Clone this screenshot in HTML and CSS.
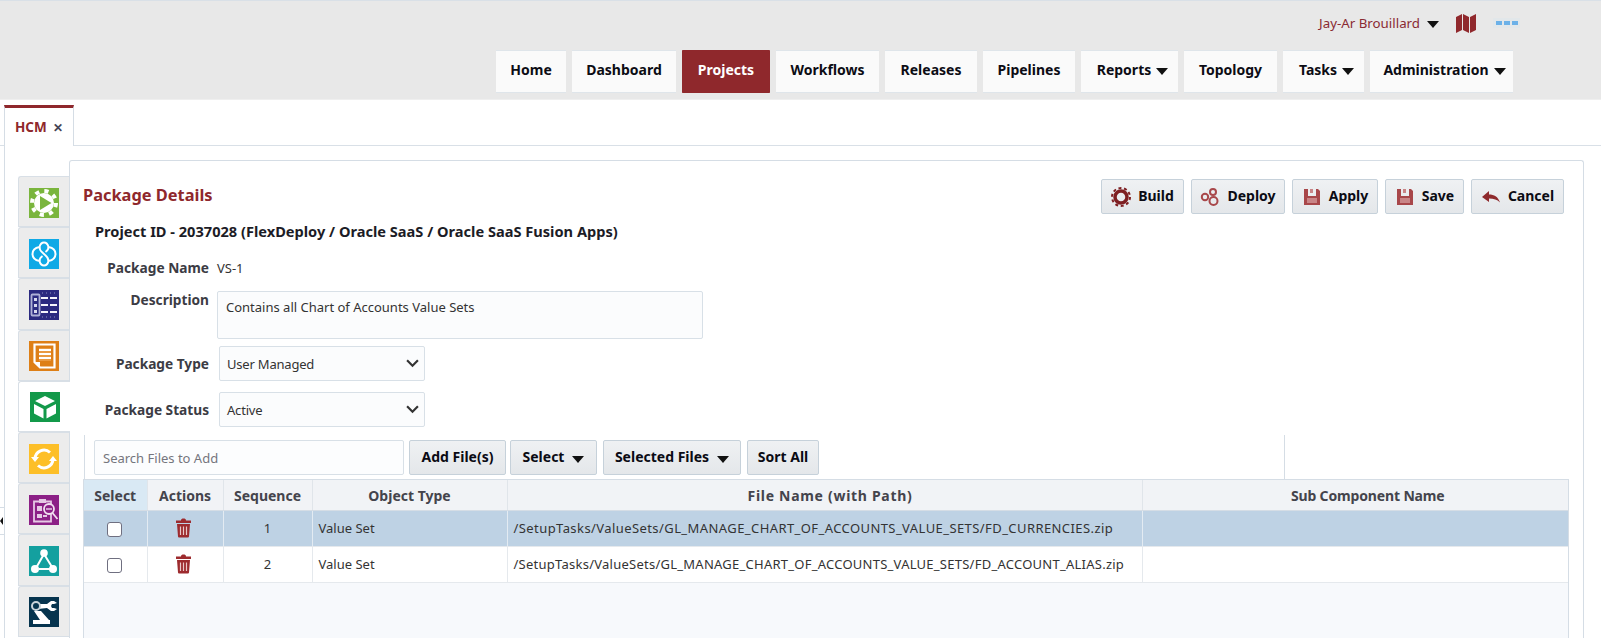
FILE: index.html
```html
<!DOCTYPE html>
<html lang="en">
<head>
<meta charset="utf-8">
<title>Package Details</title>
<link rel="stylesheet" href="styles.css">
</head>
<body>
<header class="top">
  <div class="user-row">
    <span class="user-name">Jay-Ar Brouillard</span>
    <span class="caret user-caret"></span>
    <svg class="map-icon" viewBox="0 0 20 19"><path d="M0 3 6 0v16l-6 3zM7 0l6 3v16l-6-3zM14 3l6-3v16l-6 3z" fill="#90282c"/></svg>
    <span class="dots"><i></i><i></i><i></i></span>
  </div>
  <nav class="nav">
    <a class="nav-item w-home">Home</a>
    <a class="nav-item w-dash">Dashboard</a>
    <a class="nav-item active w-proj">Projects</a>
    <a class="nav-item w-work">Workflows</a>
    <a class="nav-item w-rel">Releases</a>
    <a class="nav-item w-pipe">Pipelines</a>
    <a class="nav-item has-caret w-rep">Reports<span class="caret"></span></a>
    <a class="nav-item w-top">Topology</a>
    <a class="nav-item has-caret w-task">Tasks<span class="caret"></span></a>
    <a class="nav-item has-caret w-admin">Administration<span class="caret"></span></a>
  </nav>
</header>

<div class="tabstrip">
  <div class="tab"><span class="tab-name">HCM</span><span class="tab-x">✕</span></div>
</div>

<div class="workspace">
  <aside class="side">
    <div class="side-tab"><svg class="ico" viewBox="0 0 30 30"><rect width="30" height="30" fill="#7ab53d"/><circle cx="15" cy="15" r="10" fill="#fff"/><circle cx="15" cy="15" r="12" fill="none" stroke="#fff" stroke-width="4" stroke-dasharray="4.200 5.220"/><path d="M11 8 22.500 15 11 22z" fill="#7ab53d"/></svg></div>
    <div class="side-tab"><svg class="ico" viewBox="0 0 30 30"><rect width="30" height="30" fill="#0fa9e6"/><path d="M15 3.500c3 0 4 2.500 4.500 4.500 2.500.5 7 1.500 7 7s-4.500 6.500-7 7c-.5 2-1.500 4.500-4.500 4.500s-4-2.500-4.500-4.500c-2.500-.5-7-1.500-7-7s4.500-6.500 7-7C11 6 12 3.500 15 3.500z" fill="none" stroke="#fff" stroke-width="2"/><path d="M10.500 8c0 4 2.500 5 4.500 7s4.500 3 4.500 7M19.500 8c0 3-1.500 4-3 5M13.500 17c-1.500 1-3 2-3 5" fill="none" stroke="#fff" stroke-width="1.800"/></svg></div>
    <div class="side-tab"><svg class="ico" viewBox="0 0 30 30"><rect width="30" height="30" fill="#2b2a80"/><rect x="2.500" y="4.500" width="8" height="21" rx="1" fill="none" stroke="#aeb0d6" stroke-width="1.800"/><path d="M5 8h3v3H5zM5 14h3v3H5zM5 20h3v3H5z" fill="#d8d9ee"/><path d="M12 8h7M21 8h7M12 15h7M21 15h7M12 22h7M21 22h7" stroke="#f4f4fb" stroke-width="2"/><path d="M13 3h16M13 27h16" stroke="#8f90c4" stroke-width="1" stroke-dasharray="1 3"/></svg></div>
    <div class="side-tab"><svg class="ico" viewBox="0 0 30 30"><rect width="30" height="30" fill="#de7f16"/><path d="M5.500 3.500h20v23H11L5.500 21z" fill="none" stroke="#fff" stroke-width="2.200"/><path d="M6 21h5v5z" fill="#fff"/><path d="M10 7h12v13H10z" fill="#e99a42"/><path d="M10 9h12M10 13h12M10 17h12" stroke="#fff" stroke-width="1.800"/></svg></div>
    <div class="side-tab current"><svg class="ico" viewBox="0 0 30 30"><rect width="30" height="30" fill="#13994a"/><path d="M15 4l10 5-10 5-10-5zM4 12l9.500 5v9.500L4 21.500zM26 12l-9.500 5v9.500l9.500-5z" fill="#fff"/></svg></div>
    <div class="side-tab"><svg class="ico" viewBox="0 0 30 30"><rect width="30" height="30" fill="#fdbf28"/><path d="M6 15a9 9 0 0 1 15-6.500" fill="none" stroke="#fff" stroke-width="3"/><path d="M24 15a9 9 0 0 1-15 6.500" fill="none" stroke="#fff" stroke-width="3"/><path d="M2 13h8l-4 5zM28 17h-8l4-5z" fill="#fff"/></svg></div>
    <div class="side-tab"><svg class="ico" viewBox="0 0 30 30"><rect width="30" height="30" fill="#8c2086"/><path d="M5 6.500h17v20H5z" fill="none" stroke="#e5c9e4" stroke-width="1.800"/><path d="M10 4h7v4h-7z" fill="#e5c9e4"/><path d="M8 11h5v5H8zM8 19h5v4H8zM14 20h4v2h-4z" fill="#e5c9e4"/><circle cx="20" cy="14" r="5" fill="#8c2086" stroke="#f2e2f1" stroke-width="1.800"/><path d="M17 14h6" stroke="#e5c9e4" stroke-width="1.500"/><path d="M23.500 18l5 6" stroke="#f2e2f1" stroke-width="1.800"/></svg></div>
    <div class="side-tab"><svg class="ico" viewBox="0 0 30 30"><rect width="30" height="30" fill="#14a09f"/><path d="M15 8 7 22M15 8l8 13M10 23h11" fill="none" stroke="#fff" stroke-width="2"/><circle cx="15" cy="7" r="3.800" fill="#fff"/><circle cx="6" cy="23" r="4" fill="#fff"/><circle cx="24" cy="23" r="4" fill="#fff"/></svg></div>
    <div class="side-tab"><svg class="ico" viewBox="0 0 30 30"><rect width="30" height="30" fill="#06344e"/><path d="M5 14h7l8 9h1v4H4v-4h7z" fill="#fff"/><path d="M9 7h9l4-3h3l3 2-3 1h-2l-1 2 1 2h2l3 1-3 2h-3l-4-3-9 1z" fill="#fff"/><circle cx="7" cy="9" r="4" fill="#06344e" stroke="#c9d3d9" stroke-width="2"/></svg></div>
  </aside>

  <main class="panel">
    <div class="title-row">
      <h1 class="title">Package Details</h1>
      <div class="actions">
        <button class="btn w-build"><svg class="btn-ico" viewBox="0 0 20 20"><circle cx="10" cy="10" r="6" fill="none" stroke="#7e1f22" stroke-width="3.500"/><circle cx="10" cy="10" r="9" fill="none" stroke="#7e1f22" stroke-width="2" stroke-dasharray="3 2.650"/></svg>Build</button>
        <button class="btn w-deploy"><svg class="btn-ico" viewBox="0 0 20 20"><g fill="none" stroke="#a8474a" stroke-width="2"><circle cx="5" cy="10" r="3.200"/><circle cx="13" cy="5" r="3"/><circle cx="13.500" cy="14" r="4"/></g></svg>Deploy</button>
        <button class="btn w-apply"><svg class="btn-ico" viewBox="0 0 20 20"><path d="M2 2h4v7h8V2h2l2 2v14H2z" fill="#a8474a"/><path d="M8 2h3v4H8zM5 11h10v5H5z" fill="#c98587"/></svg>Apply</button>
        <button class="btn w-save"><svg class="btn-ico" viewBox="0 0 20 20"><path d="M2 2h4v7h8V2h2l2 2v14H2z" fill="#a8474a"/><path d="M8 2h3v4H8zM5 11h10v5H5z" fill="#c98587"/></svg>Save</button>
        <button class="btn w-cancel"><svg class="btn-ico" viewBox="0 0 20 20"><path d="M1 10l7-6v3.500c5 0 9 2 11 8-3-3-6-4-11-4V15z" fill="#8e2a2d"/></svg>Cancel</button>
      </div>
    </div>

    <div class="project">Project ID - 2037028 (FlexDeploy / Oracle SaaS / Oracle SaaS Fusion Apps)</div>

    <div class="form">
      <div class="field f-name"><label class="lbl">Package Name</label><span class="val">VS-1</span></div>
      <div class="field f-desc"><label class="lbl">Description</label><div class="textarea">Contains all Chart of Accounts Value Sets</div></div>
      <div class="field f-type"><label class="lbl">Package Type</label><div class="select">User Managed<svg class="chev" viewBox="0 0 12 8"><path d="M1 1l5 5 5-5" fill="none" stroke="#333" stroke-width="2"/></svg></div></div>
      <div class="field f-status"><label class="lbl">Package Status</label><div class="select">Active<svg class="chev" viewBox="0 0 12 8"><path d="M1 1l5 5 5-5" fill="none" stroke="#333" stroke-width="2"/></svg></div></div>
    </div>

    <div class="toolbar">
      <div class="search">Search Files to Add</div>
      <button class="tbtn w-add">Add File(s)</button>
      <button class="tbtn w-sel">Select<span class="caret"></span></button>
      <button class="tbtn w-selfiles">Selected Files<span class="caret"></span></button>
      <button class="tbtn w-sort">Sort All</button>
      <span class="tool-end"></span>
    </div>

    <div class="grid-wrap">
      <table class="grid">
        <colgroup><col class="c1"><col class="c2"><col class="c3"><col class="c4"><col class="c5"><col></colgroup>
        <thead>
          <tr><th class="sel-head">Select</th><th>Actions</th><th>Sequence</th><th>Object Type</th><th class="th-file">File Name (with Path)</th><th class="th-sub">Sub Component Name</th></tr>
        </thead>
        <tbody>
          <tr class="selected">
            <td class="mid"><span class="check"></span></td>
            <td class="mid"><svg class="trash" viewBox="0 0 17 20"><path d="M6 2.500C6 1 7 .5 8.500.5S11 1 11 2.500h5V5H1V2.500zM2 6h13l-1 12.500q-.1 1-1 1H4q-.9 0-1-1z" fill="#9d2b2e"/><path d="M5.500 8.500v8.500M8.500 8.500v8.500M11.500 8.500v8.500" stroke="#e9c9c9" stroke-width="1.200"/></svg></td>
            <td class="mid">1</td><td>Value Set</td>
            <td class="path-a">/SetupTasks/ValueSets/GL_MANAGE_CHART_OF_ACCOUNTS_VALUE_SETS/FD_CURRENCIES.zip</td><td></td>
          </tr>
          <tr>
            <td class="mid"><span class="check"></span></td>
            <td class="mid"><svg class="trash" viewBox="0 0 17 20"><path d="M6 2.500C6 1 7 .5 8.500.5S11 1 11 2.500h5V5H1V2.500zM2 6h13l-1 12.500q-.1 1-1 1H4q-.9 0-1-1z" fill="#9d2b2e"/><path d="M5.500 8.500v8.500M8.500 8.500v8.500M11.500 8.500v8.500" stroke="#e9c9c9" stroke-width="1.200"/></svg></td>
            <td class="mid">2</td><td>Value Set</td>
            <td class="path-b">/SetupTasks/ValueSets/GL_MANAGE_CHART_OF_ACCOUNTS_VALUE_SETS/FD_ACCOUNT_ALIAS.zip</td><td></td>
          </tr>
        </tbody>
      </table>
    </div>
  </main>
</div>

<div class="handle"><span class="handle-arrow"></span></div>
</body>
</html>
```

FILE: styles.css
```css
* { box-sizing: border-box; }
html, body { margin: 0; height: 638px; overflow: hidden; }
body {
  position: relative;
  display: flex;
  flex-direction: column;
  background: #fff;
  color: #222;
  font: 13px "Noto Sans", "Liberation Sans", sans-serif;
}

.top {
  height: 100px;
  flex: none;
  background: #e8e8e8;
  border-top: 1px solid #d9e0e7;
  border-bottom: 1px solid #efefef;
}
.user-row {
  height: 49px;
  display: flex;
  align-items: center;
  justify-content: flex-end;
  padding: 0 81px 5px 0;
}
.user-name { color: #8a2a33; font-size: 13.300px; }
.caret {
  display: inline-block;
  width: 0;
  height: 0;
  margin-left: 5px;
  border-left: 6px solid transparent;
  border-right: 6px solid transparent;
  border-top: 7px solid #111;
}
.user-caret { margin-left: 7px; margin-top: 2px; }
.map-icon { width: 20px; height: 19px; margin-left: 17px; }
.dots {
  width: 27px;
  height: 10px;
  margin-left: 17px;
  display: flex;
  align-items: center;
  justify-content: center;
  gap: 2px;
  background: #e2e7ea;
}
.dots i { width: 6px; height: 4px; background: #6cb1e8; }

.nav {
  display: flex;
  justify-content: flex-end;
  gap: 6px;
  padding-right: 88px;
}
.nav-item {
  height: 43px;
  padding-bottom: 5px;
  display: flex;
  align-items: center;
  justify-content: center;
  background: #fafafa;
  border: 1px solid #dfe5ea;
  border-width: 1px 0 1px 0;
  color: #0c0c14;
  font-weight: 700;
  font-size: 14px;
}
.nav-item.has-caret { padding-left: 6px; }
.nav-item .caret { margin-top: 4px; }
.nav-item.active { background: #8f282c; color: #fff; border-color: #8f282c; border-radius: 1px; }
.w-home { width: 70px; }
.w-dash { width: 104px; }
.w-proj { width: 88px; }
.w-work { width: 103px; }
.w-rel { width: 92px; }
.w-pipe { width: 92px; }
.w-rep { width: 97px; }
.w-top { width: 93px; }
.w-task { width: 81px; }
.w-admin { width: 143px; }

.tabstrip {
  height: 46px;
  flex: none;
  padding: 5px 0 0 4px;
  border-bottom: 1px solid #d9e0e7;
  display: flex;
}
.tab {
  width: 70px;
  height: 41px;
  margin-bottom: -1px;
  background: #fff;
  border-top: 3px solid #8f282c;
  border-left: 1px solid #d5dde5;
  border-right: 1px solid #d5dde5;
  display: flex;
  align-items: center;
  padding-left: 10px;
}
.tab-name { color: #8f282c; font-weight: 700; font-size: 13.500px; }
.tab-x { color: #445; font-size: 12px; margin-left: 6px; font-weight: 700; }

.workspace {
  flex: 1;
  min-height: 0;
  display: flex;
  margin-left: 4px;
  padding: 14px 17px 0 13px;
  border-left: 1px solid #d5dde5;
}
.side {
  width: 51px;
  flex: none;
  padding-top: 16px;
  display: flex;
  flex-direction: column;
}
.side-tab {
  height: 51.200px;
  flex: none;
  padding-top: 2px;
  display: flex;
  align-items: center;
  justify-content: center;
  background: #ececec;
  border: 1px solid #d8dfe6;
  border-right: 0;
  border-top-left-radius: 3px;
}
.side-tab.current { background: #fff; margin-right: -1px; position: relative; z-index: 1; }
.ico { width: 30px; height: 30px; display: block; }

.panel {
  flex: 1;
  min-width: 0;
  display: flex;
  flex-direction: column;
  padding: 18px 14px 0 13px;
  background: #fff;
  border: 1px solid #d5dde5;
  border-bottom: 0;
  border-radius: 3px 3px 0 0;
}
.title-row {
  height: 35px;
  flex: none;
  display: flex;
  align-items: center;
  justify-content: space-between;
  padding-right: 5px;
}
.title {
  margin: 0 0 4px;
  color: #8f282c;
  font-size: 16.400px;
  font-weight: 700;
}
.actions { display: flex; gap: 7px; }
.btn, .tbtn {
  height: 35px;
  padding: 0 0 2px;
  display: flex;
  align-items: center;
  justify-content: center;
  background: linear-gradient(#eff1f3, #e4e7ea);
  border: 1px solid #c6d1da;
  border-radius: 2px;
  color: #0b0b14;
  font: 700 14px "Noto Sans", "Liberation Sans", sans-serif;
}
.btn-ico { width: 20px; height: 20px; margin-right: 7px; margin-top: 2px; }
.w-build { width: 83px; }
.w-deploy { width: 94px; }
.w-apply { width: 86px; }
.w-save { width: 79px; }
.w-cancel { width: 93px; }

.project {
  margin: 7px 0 0 12px;
  height: 20px;
  line-height: 20px;
  color: #1c1c26;
  font-weight: 700;
  font-size: 14.600px;
  white-space: nowrap;
}

.form { flex: none; }
.field {
  display: flex;
  align-items: center;
}
.lbl {
  width: 126px;
  flex: none;
  text-align: right;
  color: #3c3c44;
  font-weight: 700;
  font-size: 13.700px;
}
.f-name { margin-top: 16px; height: 20px; }
.val { margin-left: 8px; margin-top: 2px; font-size: 13px; color: #333; }
.f-desc { margin-top: 14px; height: 48px; align-items: flex-start; }
.f-desc .lbl { margin-top: -1px; }
.textarea {
  width: 486px;
  height: 48px;
  margin-left: 8px;
  padding: 6px 8px;
  background: #fbfcfd;
  border: 1px solid #d8e0e7;
  border-radius: 2px;
  font-size: 13px;
  color: #333;
}
.f-type { margin-top: 7px; height: 35px; }
.f-status { margin-top: 11px; height: 35px; }
.select {
  width: 206px;
  height: 35px;
  margin-left: 10px;
  padding: 0 5px 0 7px;
  display: flex;
  align-items: center;
  justify-content: space-between;
  background: #fbfcfd;
  border: 1px solid #d8e0e7;
  border-radius: 2px;
  font-size: 13px;
  letter-spacing: -.2px;
  color: #333;
}
.chev { width: 13px; height: 9px; }

.toolbar {
  flex: none;
  margin: 8px 0 0 1px;
  height: 44px;
  padding: 5px 0 4px 9px;
  border-left: 1px solid #d5dde5;
  display: flex;
  gap: 5px;
}
.search {
  width: 310px;
  display: flex;
  align-items: center;
  padding-left: 8px;
  background: #fcfdfe;
  border: 1px solid #d8e0e7;
  border-radius: 2px;
  color: #75757d;
  font-size: 13px;
}
.tbtn { height: 35px; }
.tbtn .caret { margin-left: 8px; margin-top: 6px; }
.w-add { width: 97px; }
.w-sel { width: 87px; margin-left: -1px; }
.w-selfiles { width: 138px; margin-left: 1px; }
.w-sort { width: 72px; margin-left: 1px; }
.tool-end { width: 466px; margin-left: -5px; border-right: 1px solid #d5dde5; margin-top: -5px; margin-bottom: -4px; }

.grid-wrap {
  flex: 1;
  min-height: 0;
  background: #f7f9fc;
  border: 1px solid #d5dde5;
  border-bottom: 0;
}
.grid {
  width: 100%;
  border-collapse: collapse;
  table-layout: fixed;
  font-size: 13px;
  color: #333;
}
.c1 { width: 63px; }
.c2 { width: 76px; }
.c3 { width: 89px; }
.c4 { width: 195px; }
.c5 { width: 635px; }
.grid th {
  height: 30px;
  padding-top: 2px;
  background: #f1f3f6;
  border: 1px solid #e0e5ea;
  border-top: 0;
  border-bottom: 1px solid #d5dde5;
  color: #44444c;
  font-size: 14px;
  font-weight: 700;
  text-align: center;
}
.grid th.sel-head { background: #d9e9f4; border-left: 0; }
.grid th.th-file { padding-left: 12px; letter-spacing: .7px; }
.grid th.th-sub { padding-left: 26px; letter-spacing: -.15px; }
.grid th:last-child, .grid td:last-child { border-right: 0; }
.grid td {
  height: 36px;
  padding: 0 6px;
  background: #fff;
  border: 1px solid #e5e9ed;
  border-top: 0;
  white-space: nowrap;
}
.grid td:first-child { border-left: 0; }
.grid tr.selected td { background: #bed2e4; border-right-color: #e3ebf2; }
.grid td.mid { text-align: center; }
.grid td.path-a { letter-spacing: .42px; }
.grid td.path-b { letter-spacing: .25px; }
.check {
  display: inline-block;
  width: 15px;
  height: 15px;
  vertical-align: middle;
  margin-right: 1px;
  background: #fff;
  border: 1px solid #6f6f80;
  border-radius: 3px;
}
.trash { width: 17px; height: 20px; vertical-align: middle; margin-right: 4px; }

.handle {
  position: absolute;
  left: 0;
  top: 507px;
  width: 5px;
  height: 28px;
  background: #fff;
  border: 1px solid #d5dde5;
  border-left: 0;
  display: flex;
  align-items: center;
}
.handle-arrow {
  width: 0;
  height: 0;
  border-top: 4px solid transparent;
  border-bottom: 4px solid transparent;
  border-right: 3px solid #111;
}
```
